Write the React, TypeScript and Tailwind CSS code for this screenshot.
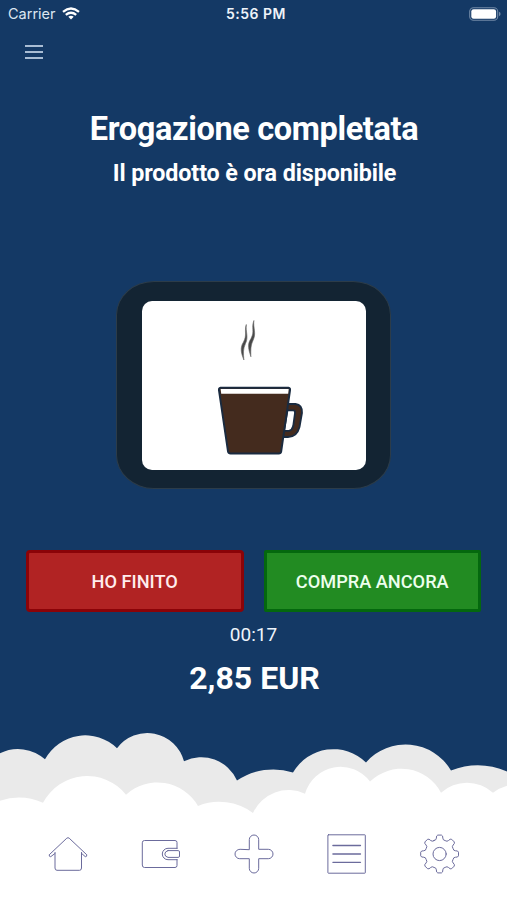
import type { ReactNode } from 'react';
import { clsx } from 'clsx';

const TOOTH: [string, [number, number][]][] = [
  ['Q', [[14.2, -13], [16.2, -11.5]]],
  ['Q', [[18.8, -10.5], [19, -5.5]]],
  ['L', [[19, 5.5]]],
  ['Q', [[18.8, 10.5], [16.2, 11.5]]],
  ['Q', [[14.2, 13], [14.5, 22.5]]],
];

function polar(r: number, deg: number) {
  const a = (deg * Math.PI) / 180;
  return `${(20.6 + r * Math.sin(a)).toFixed(2)} ${(20 - r * Math.cos(a)).toFixed(2)}`;
}

function gearPath() {
  let d = `M${polar(14.5, -22.5)}`;
  for (let i = 0; i < 8; i++) {
    for (const [cmd, pts] of TOOTH) {
      d += cmd + pts.map(([r, a]) => polar(r, a + i * 45)).join(' ');
    }
  }
  return d + 'Z';
}

const tabs: { id: string; label: string; icon: ReactNode }[] = [
  {
    id: 'home',
    label: 'Home',
    icon: (
      <>
        <path d="M7 19.5 2.7 22.7Q1 22.8 1.2 20.8L18.8 4.2Q20 3.2 21.2 4.2L38.8 20.8Q39 22.8 37.3 22.7L33.5 19.3" />
        <path d="M7 18.5V34Q7 36.3 9 36.3H31.5Q33.5 36.3 33.5 34V18.5" />
      </>
    ),
  },
  {
    id: 'wallet',
    label: 'Wallet',
    icon: (
      <>
        <path d="M36 14.5V8.5Q36 6.5 34 6.5H3.5Q1.3 6.5 1.3 8.8V31Q1.3 33.5 3.5 33.5H34Q36 33.5 36 31.5V25.5" />
        <path d="M36 14.3H27a5.7 5.7 0 0 0 0 11.4H36" />
        <path d="M27 16.6H37.3Q38.5 16.6 38.5 18V22Q38.5 23.4 37.3 23.4H27Q23.8 22.5 23.8 20T27 16.6Z" />
      </>
    ),
  },
  {
    id: 'add',
    label: 'Add',
    icon: (
      <path d="M15.3 15.3V5.7a4.7 4.7 0 0 1 9.4 0V15.3H34.3a4.7 4.7 0 0 1 0 9.4H24.7V34.3a4.7 4.7 0 0 1-9.4 0V24.7H5.7a4.7 4.7 0 0 1 0-9.4Z" />
    ),
  },
  {
    id: 'list',
    label: 'List',
    icon: (
      <>
        <rect x="1.9" y="0.8" width="37.4" height="38.4" rx="0.5" />
        <path d="M6.9 11.5H34.5M6.9 20H34.5M6.9 28.3H34.5" strokeWidth="1.3" />
      </>
    ),
  },
  {
    id: 'settings',
    label: 'Settings',
    icon: (
      <>
        <path d={gearPath()} />
        <circle cx="20.6" cy="20" r="6.6" />
      </>
    ),
  },
];

export default function App() {
  return (
    <div className="flex h-[900px] w-[507px] flex-col overflow-hidden bg-[#143965] font-['Roboto',sans-serif] text-white">
      <StatusBar />
      <header className="flex h-12 items-center pt-0.5 pl-[25px]">
        <button aria-label="Menu" className="flex w-[18px] flex-col gap-[4.5px]">
          <span className="h-[1.7px] bg-[#a9bdd4]" />
          <span className="h-[1.7px] bg-[#a9bdd4]" />
          <span className="h-[1.7px] bg-[#a9bdd4]" />
        </button>
      </header>

      <main className="flex flex-1 flex-col items-center">
        <h1 className="mt-[34px] pl-px text-[32.5px] leading-10 font-bold tracking-[-0.36px] whitespace-nowrap">Erogazione completata</h1>
        <h2 className="mt-[9.5px] pl-0.5 text-[23.3px] leading-7 font-bold tracking-[-0.1px] whitespace-nowrap">Il prodotto è ora disponibile</h2>

        <div className="mt-[94.5px] flex h-[208px] w-[275px] items-center justify-center rounded-[38px/34px] border border-[#2c3c49] bg-[#132433]">
          <div className="h-[169px] w-[224px] rounded-[10px] bg-white">
            <Cup />
          </div>
        </div>

        <div className="mt-[61px] flex w-[455px] gap-5">
          <ActionButton tone="danger">HO FINITO</ActionButton>
          <ActionButton tone="success">COMPRA ANCORA</ActionButton>
        </div>
        <p className="mt-[11px] text-[19px] leading-6 text-[#eef4fb]">00:17</p>
        <p className="mt-[11.5px] pl-0.5 text-[32px] leading-[38px] font-bold">2,85 EUR</p>
      </main>

      <Clouds />
      <nav className="flex h-[85px] shrink-0 items-start justify-between bg-white px-12 pt-[19px]">
        {tabs.map((tab) => (
          <button key={tab.id} aria-label={tab.label}>
            <svg viewBox="0 0 40 40" className="h-10 w-10" fill="none" stroke="#6b6b9c" strokeWidth="1" strokeLinejoin="round" strokeLinecap="round">
              {tab.icon}
            </svg>
          </button>
        ))}
      </nav>
    </div>
  );
}

function StatusBar() {
  return (
    <div className="grid h-[27px] shrink-0 grid-cols-3 items-center pr-1.5 pl-2">
      <div className="flex items-center gap-[7px] font-['Inter',sans-serif] text-[14.5px] text-[#dce6f1]">
        <span>Carrier</span>
        <svg viewBox="0 0 18 13" className="h-[13px] w-[18px] -translate-x-px" fill="none" stroke="#fff" strokeWidth="2.3">
          <path d="M1 4.8Q9-1.8 17 4.8" />
          <path d="M3.8 7.9Q9 3.7 14.2 7.9" />
          <path d="M6.3 9.8Q9 7.7 11.7 9.8L9 12.6Z" fill="#fff" stroke="none" />
        </svg>
      </div>
      <div className="pl-[3px] text-center font-['Inter',sans-serif] text-[14px] font-semibold tracking-[0.5px] whitespace-nowrap text-[#eef3f9]">5:56 PM</div>
      <svg viewBox="0 0 32 14" className="h-3.5 w-8 justify-self-end">
        <rect x="0.7" y="0.7" width="28" height="12.6" rx="3.8" fill="none" stroke="#7189a6" strokeWidth="1.1" />
        <rect x="2.3" y="2.3" width="24.8" height="9.4" rx="2.3" fill="#fff" />
        <path d="M30 4.8Q31.6 5.4 31.6 7T30 9.2Z" fill="#7189a6" />
      </svg>
    </div>
  );
}

function Cup() {
  return (
    <svg viewBox="142 301 224 169" className="h-full w-full">
      <path d="M246.3 324.5C244.1 331 247.3 335 243.5 342C239.5 348 241.5 354 243.9 360C243.3 353 243 349 245.5 343.5C248.8 337 245.5 332 246.3 324.5Z" fill="#484848" stroke="#666" strokeWidth="0.6" />
      <path d="M253.9 320.5C251 328 254.9 331 251 338.5C246.8 344.5 248.8 350 250.9 356.8C250.7 350 250.5 345.5 253.2 340C256.5 333 253 328 253.9 320.5Z" fill="#484848" stroke="#666" strokeWidth="0.6" />
      <path d="M286 404H295.5Q302.5 405 302 413L299.5 427Q297 436.8 288 437H281" fill="#442b1e" stroke="#1a2b40" strokeWidth="1.8" />
      <path d="M287.5 410.3H293.5Q295.2 410.5 295 413L293.2 426Q292.2 430 289 430.8H284Z" fill="#fff" stroke="#1a2b40" strokeWidth="1.8" />
      <path d="M220.5 387.8H288.5Q290.5 388 290 390.5L281.2 451.5Q280.8 453.5 278.8 453.5H230.5Q228.5 453.5 228 451.5L219 390.5Q218.6 388 220.5 387.8Z" fill="#442b1e" stroke="#1a2b40" strokeWidth="1.9" />
      <path d="M220.6 389H288.7L288.2 393.8H221.2Z" fill="#fff" />
    </svg>
  );
}

function ActionButton({ tone, children }: { tone: 'danger' | 'success'; children: ReactNode }) {
  return (
    <button
      className={clsx(
        'h-[62px] flex-1 border-[3px] pt-0.5 text-[18.2px] font-medium',
        tone === 'danger' ? 'rounded-[4px] border-[#8b0308] bg-[#b12323] text-[#ffeded]' : 'rounded-[2px] border-[#04680e] bg-[#228b22] text-[#edffed]'
      )}
    >
      {children}
    </button>
  );
}

function Clouds() {
  return (
    <svg viewBox="0 730 507 85" className="-mb-px h-[86px] w-full shrink-0" preserveAspectRatio="none">
      <path
        fill="#eaeaea"
        d="M0 753A41 41 0 0 1 45 759A46 46 0 0 1 117 748A38 38 0 0 1 184 761A39 39 0 0 1 237 780A65 65 0 0 1 293 772A47 47 0 0 1 366 762A53 53 0 0 1 451 770A75 75 0 0 1 507 771V815H0Z"
      />
      <path
        fill="#fff"
        d="M0 800A60 60 0 0 1 43 802A50 50 0 0 1 126 794A47 47 0 0 1 198 805A58 58 0 0 1 253 812A39 39 0 0 1 305 793A37 37 0 0 1 370 781A45 45 0 0 1 441 792A39 39 0 0 1 493 792A40 40 0 0 1 507 785V816H0Z"
      />
    </svg>
  );
}
